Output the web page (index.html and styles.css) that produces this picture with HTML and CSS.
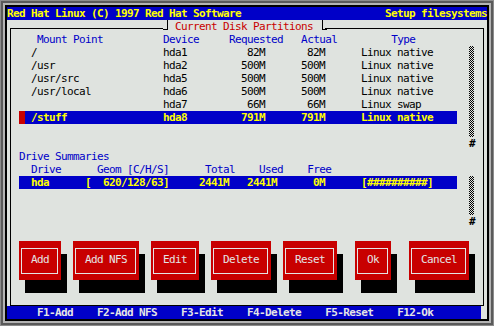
FILE: index.html
```html
<!DOCTYPE html>
<html>
<head>
<meta charset="utf-8">
<title>Setup filesystems</title>
<link rel="stylesheet" href="styles.css">
</head>
<body>
<div class="frame">
  <div class="screen">
    <div class="row topbar"><span>Red Hat Linux (C) 1997 Red Hat Software</span><span>Setup filesystems</span></div>

    <div class="dialog">
      <div class="row dtitle">Current Disk Partitions</div>

      <div class="row head">    Mount Point          Device     Requested   Actual         Type</div>

      <div class="listbox plist">
        <div class="items">
          <div class="prow"><span class="mark"></span><div class="pbody"><span class="c-mount">/</span><span class="c-dev">hda1</span><span class="c-num">82M</span><span class="c-num">82M</span><span class="c-type">Linux native</span></div></div>
          <div class="prow"><span class="mark"></span><div class="pbody"><span class="c-mount">/usr</span><span class="c-dev">hda2</span><span class="c-num">500M</span><span class="c-num">500M</span><span class="c-type">Linux native</span></div></div>
          <div class="prow"><span class="mark"></span><div class="pbody"><span class="c-mount">/usr/src</span><span class="c-dev">hda5</span><span class="c-num">500M</span><span class="c-num">500M</span><span class="c-type">Linux native</span></div></div>
          <div class="prow"><span class="mark"></span><div class="pbody"><span class="c-mount">/usr/local</span><span class="c-dev">hda6</span><span class="c-num">500M</span><span class="c-num">500M</span><span class="c-type">Linux native</span></div></div>
          <div class="prow"><span class="mark"></span><div class="pbody"><span class="c-mount"></span><span class="c-dev">hda7</span><span class="c-num">66M</span><span class="c-num">66M</span><span class="c-type">Linux swap</span></div></div>
          <div class="prow sel"><span class="mark"></span><div class="pbody"><span class="c-mount">/stuff</span><span class="c-dev">hda8</span><span class="c-num">791M</span><span class="c-num">791M</span><span class="c-type">Linux native</span></div></div>
        </div>
        <div class="sb"><div class="sb-track"></div><div class="row sb-thumb">#</div></div>
      </div>

      <div class="row head"> Drive Summaries</div>
      <div class="row head">   Drive      Geom [C/H/S]      Total    Used    Free</div>

      <div class="listbox dlist">
        <div class="items">
          <div class="dbody"><span class="d-drive">hda</span><span class="d-geom">[  620/128/63]</span><span class="d-total">2441M</span><span class="d-num">2441M</span><span class="d-num">0M</span><span class="d-bar">[##########]</span></div>
        </div>
        <div class="sb"><div class="sb-track"></div><div class="row sb-thumb">#</div></div>
      </div>

      <div class="btnrow">
        <div class="btn"><div class="btn-in">Add</div></div>
        <div class="btn"><div class="btn-in">Add NFS</div></div>
        <div class="btn"><div class="btn-in">Edit</div></div>
        <div class="btn"><div class="btn-in">Delete</div></div>
        <div class="btn"><div class="btn-in">Reset</div></div>
        <div class="btn wide"><div class="btn-in">Ok</div></div>
        <div class="btn wide"><div class="btn-in">Cancel</div></div>
      </div>
    </div>

    <div class="row helpbar">     F1-Add    F2-Add NFS    F3-Edit    F4-Delete    F5-Reset    F12-Ok</div>
  </div>
</div>
</body>
</html>
```

FILE: styles.css
```css
* { box-sizing: border-box; margin: 0; padding: 0; }

html, body {
  width: 494px;
  height: 326px;
  overflow: hidden;
  background: #8c8c8c;
}

.frame {
  width: 494px;
  height: 326px;
  padding: 7px;
  background: #8c8c8c;
  box-shadow:
    inset 0 0 0 1px #8c8c8c,
    inset 0 0 0 3px #5a5a5a,
    inset 0 0 0 5px #b4b4b4,
    inset 0 0 0 7px #000;
}

.screen {
  width: 480px;
  height: 312px;
  background: #dfe3df;
  display: flex;
  flex-direction: column;
  font-family: "DejaVu Sans Mono", monospace;
  font-size: 11px;
  letter-spacing: -0.62px;
  color: #000;
}

.row {
  height: 13px;
  padding-top: 1px;
  line-height: 12px;
  white-space: pre;
}

.topbar {
  display: flex;
  justify-content: space-between;
  background: #0000c8;
  color: #ffff00;
  font-weight: bold;
}

.dialog {
  flex: 1;
  margin: 8px 3px 0 3px;
  border: 1px solid #000;
  padding: 4px 2px 0 2px;
  position: relative;
  display: flex;
  flex-direction: column;
}

.dtitle {
  position: absolute;
  top: -9px;
  left: 152px;
  width: 162px;
  padding-left: 12px;
  background: #dfe3df;
  color: #c80000;
}
.dtitle::before,
.dtitle::after {
  content: "";
  position: absolute;
  top: 0;
  width: 4px;
  height: 9px;
  border-bottom: 1px solid #000;
}
.dtitle::before { left: 0; border-right: 1px solid #000; }
.dtitle::after { left: 159px; border-left: 1px solid #000; }

.head { color: #0000c8; }

.listbox {
  display: flex;
  margin-left: 6px;
}
.items { width: 438px; }
.plist .items { height: 104px; }
.dlist .items { height: 52px; }

.sb {
  margin-left: 12px;
  width: 6px;
  display: flex;
  flex-direction: column;
}
.sb-track {
  width: 5px;
  background: repeating-conic-gradient(#000 0 25%, transparent 0 50%) 0 0 / 2px 2px;
}
.plist .sb-track { height: 91px; }
.dlist .sb-track { height: 39px; }
.sb-thumb { font-weight: bold; }

.prow { display: flex; height: 13px; }
.mark { width: 6px; height: 13px; }
.pbody {
  width: 432px;
  height: 13px;
  padding: 1px 0 0 6px;
  line-height: 12px;
  display: flex;
}
.pbody span, .dbody span { white-space: pre; }
.c-mount { width: 132px; }
.c-dev { width: 42px; }
.c-num { width: 60px; text-align: right; }
.c-type { padding-left: 36px; }

.prow.sel .mark { background: #c80000; }
.prow.sel .pbody {
  background: #0000c8;
  color: #ffff00;
  font-weight: bold;
}

.dbody {
  width: 438px;
  height: 13px;
  padding: 1px 0 0 12px;
  line-height: 12px;
  display: flex;
  background: #0000c8;
  color: #ffff00;
  font-weight: bold;
}
.d-drive { width: 54px; }
.d-geom { width: 84px; }
.d-total { width: 60px; text-align: right; }
.d-num { width: 48px; text-align: right; }
.d-bar { padding-left: 36px; }

.btnrow {
  display: flex;
  align-items: flex-start;
  margin: 13px 0 0 6px;
  height: 52px;
}
.btn {
  height: 39px;
  padding: 7px 3px 6px 2px;
  background: #c80000;
  color: #e5e5e5;
  box-shadow: 6px 13px 0 0 #000;
}
.btn + .btn { margin-left: 12px; }
.btn + .btn.wide { margin-left: 18px; }
.btn-in {
  height: 26px;
  border: 1px solid #e5e5e5;
  padding: 5px 8px 0 9px;
  line-height: 12px;
  white-space: pre;
}

.helpbar {
  width: 474px;
  background: #0000c8;
  color: #e5e5e5;
  font-weight: bold;
}
```
